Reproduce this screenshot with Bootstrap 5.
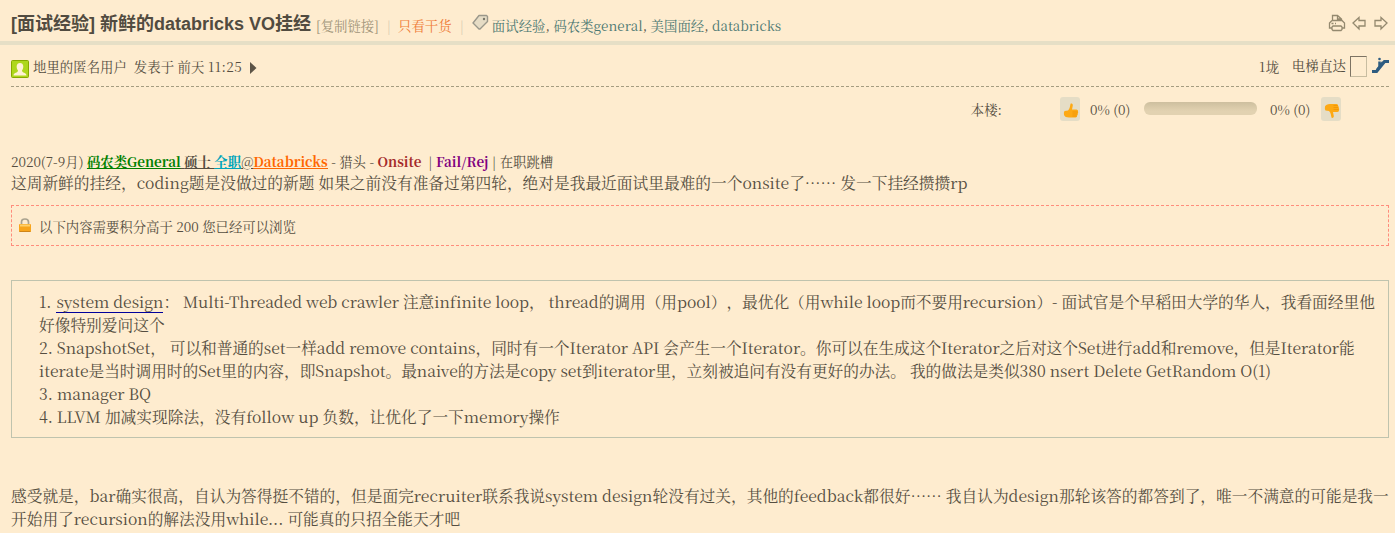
<!DOCTYPE html>
<html lang="zh-CN">
<head>
<meta charset="utf-8">
<meta name="viewport" content="width=device-width, initial-scale=1">
<title>新鲜的databricks VO挂经</title>
<link href="https://cdn.jsdelivr.net/npm/bootstrap@5.3.0/dist/css/bootstrap.min.css" rel="stylesheet">
<style>
body{background:#feeccf;color:#554e41;font-family:"Noto Serif CJK SC","Source Han Serif SC","Liberation Serif","Noto Sans CJK SC",serif;font-size:13.4px;line-height:20px;font-weight:400;overflow:hidden;height:533px;text-spacing-trim:space-all;font-feature-settings:"chws" 0,"halt" 0}
a{color:inherit;text-decoration:none}
.topic-head{height:45px;border-bottom:4px solid #e6dfc6;padding:4px 7px 0 11px}
.topic-head>a,.topic-head>span{padding-top:6px}
h1{font:bold 18px/24px "Liberation Sans","Noto Sans CJK SC",sans-serif;color:#514b40;margin:3px 0 0}
.pale{color:#a09479}.hot{color:#ef7c38}.tag-link{color:#4b7872}
.sep{color:#d8cbb0}
.tags{margin-left:3px;letter-spacing:.02px}
.post{padding:0 6px 0 11px}
.byline{height:42px;border-bottom:1px dashed #a59c80}
.author-line{margin-left:4px;padding-top:3px;letter-spacing:.03px}
.clock{letter-spacing:.45px}
.floor-no{letter-spacing:.6px;padding-top:2px}
.jump-label{margin-left:12px;letter-spacing:.15px}
.jump{width:17px;height:21px;margin-top:1px;border:1px solid #c8bda1;border-top-color:#7d7363;border-left-color:#7d7363}
.votes{height:45px;padding-right:48px}
.vote{width:20px;height:24px;margin-top:-1px;background:#e5ddc6;border-radius:3px;padding:6px 0 0 3px}
.floor-label{margin-right:58px}
.rate{width:41px;margin:0 13px 0 10px}
.rate-down{margin:0 10px 0 13px}
.meter{width:113px;height:13px;margin-bottom:2px;border-radius:6px;background:linear-gradient(#cdbf9f,#e2d2b1 70%)}
.body-text{font-size:15.71px;line-height:23px}
.meta{height:18px;margin-top:21px;line-height:18px}
.meta b{font-weight:700}
.uline{text-decoration:underline}
.c-green{color:#008000}.c-cyan{color:#00a5bb}.c-orange{color:#ff6600}.c-red{color:#a52a2a}.c-purple{color:#800080}
.locked{height:41px;margin-top:11px;border:1px dashed #ff8c7c;padding:3px 0 0 7px}
.locked svg{margin:-5px 8px 0 0}
.quote{height:158px;margin-top:34px;border:1px solid #bfc3ae;padding:9px 0 0 27px}
.closing{margin-top:46px}
.ln{white-space:nowrap;height:23px}
.snug{letter-spacing:-.035px}
.term{border-bottom:1px solid #00009c;margin-left:1px}
svg{display:block;flex:none}
.avatar{margin-top:6px}.caret{margin:5px 0 0 8px}
</style>
</head>
<body>
<header class="topic-head d-flex align-items-center text-nowrap">
<h1>[面试经验] 新鲜的databricks VO挂经</h1>
<a class="pale" style="margin-left:5px" href="#">[复制链接]</a><span class="sep mx-2">|</span><a class="hot" style="margin-left:-1px" href="#">只看干货</a><span class="sep mx-2">|</span>
<svg width="17" height="17" viewBox="0 0 17 17"><path d="M1 9 7 1.500h7.500l1 1v5L8 15h-1z" fill="#e6dcc5" stroke="#9a978a" stroke-width="1.400" stroke-linejoin="round"/><circle cx="12" cy="5" r="1.200" fill="#777568"/></svg>
<span class="tags"><a class="tag-link" href="#">面试经验</a>, <a class="tag-link" href="#">码农类general</a>, <a class="tag-link" href="#">美国面经</a>, <a class="tag-link" href="#">databricks</a></span>
<svg class="ms-auto" width="60" height="18" viewBox="0 0 60 18" fill="none" stroke="#94896f" stroke-width="1.300"><path d="M4.500 6.500V1.500h5L13.500 5v1.500M9.500 1.500V5h4M4 6.500h10l2.500 2.500V14H14M4 6.500L1.500 9v5H4M5 12h8l1 1v2.500l-1 1H5l-1-1V13zM3.500 9.500h2M7 9.500h1"/><path d="m25 9 6-5.500v3h6v5.500h-6v3zM59 9l-6-5.500v3h-6v5.500h6v3z"/></svg>
</header>
<main class="post">
<div class="byline d-flex align-items-center text-nowrap">
<svg class="avatar" width="18" height="18" viewBox="0 0 18 18"><rect x=".5" y=".5" width="17" height="17" rx="1" fill="#aed71c" stroke="#86a900"/><path d="M2.500 15.500c0-3 4.500-2.500 4.500-5C5 8 5 3 9 3s4 5 2 7.500c0 2.500 4.500 2 4.500 5z" fill="#fff2d5"/></svg>
<span class="author-line">地里的匿名用户&nbsp; 发表于 前天 <span class="clock">11:25</span></span>
<svg class="caret" width="7" height="12" viewBox="0 0 7 12"><path d="M0 0 6.500 6 0 12z" fill="#5c5447"/></svg>
<span class="ms-auto floor-no">1垅</span><span class="jump-label">电梯直达</span><span class="jump ms-1"></span>
<svg class="ms-1" width="18" height="18" viewBox="0 0 18 18"><path d="M1 14.500h4.500L13.500 4.500H18" fill="none" stroke="#2e5c80" stroke-width="3.200"/><path d="M8.500 4.500v6M12 5l-6 8" fill="none" stroke="#2e5c80" stroke-width="2.500"/><circle cx="8.500" cy="2" r="1.300" fill="#2e5c80"/></svg>
</div>
<div class="votes d-flex align-items-center justify-content-end text-nowrap">
<span class="floor-label">本楼:</span>
<span class="vote"><svg width="16" height="16" viewBox="0 0 16 16"><path d="M1.500 8 5 7.500C7 5.500 7 3 7.500 1c.3-1 2.500-.5 2.300 1.500L9 6.500h4.500q2 .3 1.500 2 .5 1-.2 2 .3 1.200-.6 2 0 1.900-1.700 2H6q-4 0-5-2.500Q.5 9.500 1.500 8z" fill="#fda914"/><path d="M9.500 9h5M9.500 11h4.500M9.500 13h4" stroke="#ed8f00" stroke-width=".7"/></svg></span>
<span class="rate">0% (0)</span><span class="meter"></span><span class="rate rate-down">0% (0)</span>
<span class="vote"><svg width="16" height="16" viewBox="0 0 16 16"><g transform="matrix(1 0 0 -1 0 15.500)"><path d="M1.500 8 5 7.500C7 5.500 7 3 7.500 1c.3-1 2.500-.5 2.300 1.500L9 6.500h4.500q2 .3 1.500 2 .5 1-.2 2 .3 1.200-.6 2 0 1.900-1.700 2H6q-4 0-5-2.500Q.5 9.500 1.500 8z" fill="#fda914"/><path d="M9.500 9h5M9.500 11h4.500M9.500 13h4" stroke="#ed8f00" stroke-width=".7"/></g></svg></span>
</div>
<div class="meta text-nowrap">2020(7-9月) <span class="uline"><b class="c-green uline">码农类General</b> <b>硕士 </b><b class="c-cyan uline">全职</b>@<b class="c-orange uline">Databricks</b></span> - 猎头 - <b class="c-red">Onsite</b>&nbsp; | <b class="c-purple">Fail/Rej</b> | 在职跳槽</div>
<div class="body-text"><div class="ln">这周新鲜的挂经，coding题是没做过的新题 如果之前没有准备过第四轮，绝对是我最近面试里最难的一个onsite了…… 发一下挂经攒攒rp</div></div>
<div class="locked d-flex align-items-center"><svg width="12" height="14" viewBox="0 0 12 14"><path d="M2.500 7V4q0-3 3.500-3t3.500 3v3" fill="none" stroke="#aaa38f" stroke-width="1.700"/><rect y="6" width="12" height="8" rx="1" fill="#f8a51c"/><path d="M1 7.500h10" stroke="#ffd06b" stroke-width="2"/><path d="M.5 13.500h11" stroke="#ce8519"/></svg>以下内容需要积分高于 200 您已经可以浏览</div>
<section class="quote body-text">
<div class="ln snug">1. <a class="term" href="#">system design</a>： Multi-Threaded web crawler 注意infinite loop， thread的调用（用pool），最优化（用while loop而不要用recursion）- 面试官是个早稻田大学的华人，我看面经里他</div>
<div class="ln">好像特别爱问这个</div>
<div class="ln snug">2. SnapshotSet， 可以和普通的set一样add remove contains，同时有一个Iterator API 会产生一个Iterator。你可以在生成这个Iterator之后对这个Set进行add和remove，但是Iterator能</div>
<div class="ln snug">iterate是当时调用时的Set里的内容，即Snapshot。最naive的方法是copy set到iterator里，立刻被追问有没有更好的办法。 我的做法是类似380 nsert Delete GetRandom O(1)</div>
<div class="ln">3. manager BQ</div>
<div class="ln">4. LLVM 加减实现除法，没有follow up 负数，让优化了一下memory操作</div>
</section>
<section class="closing body-text">
<div class="ln">感受就是，bar确实很高，自认为答得挺不错的，但是面完recruiter联系我说system design轮没有过关，其他的feedback都很好…… 我自认为design那轮该答的都答到了，唯一不满意的可能是我一</div>
<div class="ln">开始用了recursion的解法没用while... 可能真的只招全能天才吧</div>
</section>
</main>
</body>
</html>
